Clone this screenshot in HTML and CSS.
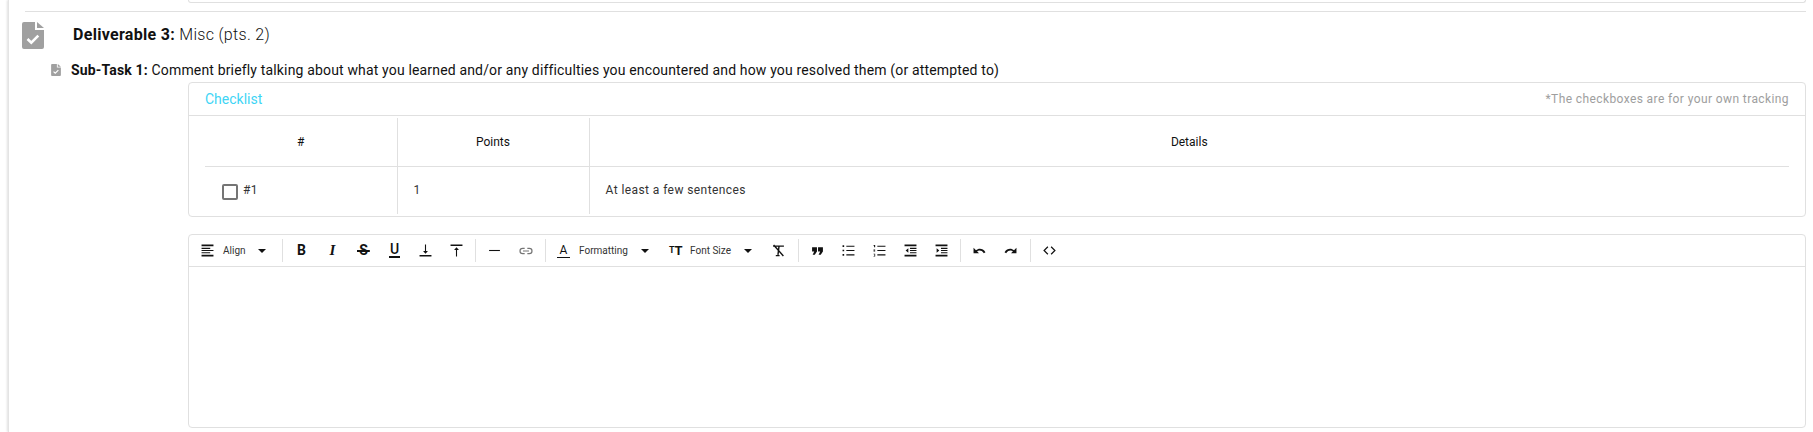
FILE: index.html
```html
<!DOCTYPE html>
<html lang="en">
<head>
  <meta charset="UTF-8">
  <title>Deliverable 3</title>
  <link rel="stylesheet" href="styles.css">
</head>
<body>
  <div class="page">
    <div class="prev-card"></div>
    <hr class="deliverable-rule">

    <div class="deliverable-header">
      <svg class="file-check" viewBox="0 0 22 27">
        <path d="M2 0H13V8H22V25a2 2 0 0 1-2 2H2a2 2 0 0 1-2-2V2a2 2 0 0 1 2-2z" fill="#a0a0a0"/>
        <path d="M15 0L22 6H15z" fill="#a0a0a0"/>
        <path d="M5.5 17l3.8 3.6 7-7" fill="none" stroke="#fff" stroke-width="2.6"/>
      </svg>
      <h2 class="deliverable-title"><b>Deliverable 3:</b> Misc (pts. 2)</h2>
    </div>

    <div class="subtask">
      <svg class="file-check-small" viewBox="0 0 22 27">
        <path d="M2 0H13V8H22V25a2 2 0 0 1-2 2H2a2 2 0 0 1-2-2V2a2 2 0 0 1 2-2z" fill="#a0a0a0"/>
        <path d="M15 0L22 6H15z" fill="#a0a0a0"/>
        <path d="M5.5 17l3.8 3.6 7-7" fill="none" stroke="#fff" stroke-width="2.6"/>
      </svg>
      <p><b>Sub-Task 1:</b> Comment briefly talking about what you learned and/or any difficulties you encountered and how you resolved them (or attempted to)</p>
    </div>

    <div class="card checklist">
      <div class="checklist-header">
        <span class="checklist-title">Checklist</span>
        <span class="checklist-note">*The checkboxes are for your own tracking</span>
      </div>
      <table class="checklist-table">
        <thead>
          <tr><th class="col-num">#</th><th class="col-points">Points</th><th>Details</th></tr>
        </thead>
        <tbody>
          <tr>
            <td><span class="check-cell"><span class="checkbox"></span>#1</span></td>
            <td>1</td>
            <td>At least a few sentences</td>
          </tr>
        </tbody>
      </table>
    </div>

    <div class="card editor">
      <div class="toolbar">
        <div class="tool-group">
          <button class="tool tool-select">
            <svg class="icon" viewBox="0 0 24 24"><path d="M1 1H23V4H1zM1 7H17V9H1zM1 11H23V13H1zM1 15H17V17H1zM1 20H23V23H1z"/></svg>
            <span class="tool-label tool-label-align">Align</span>
            <span class="caret"></span>
          </button>
        </div>
        <div class="tool-group tool-group-tight">
          <button class="tool"><span class="glyph glyph-bold">B</span></button>
          <button class="tool"><span class="glyph glyph-italic">I</span></button>
          <button class="tool"><span class="glyph glyph-strike">S</span></button>
          <button class="tool"><span class="glyph glyph-under">U</span></button>
          <button class="tool">
            <svg class="icon" viewBox="0 0 24 24"><path d="M11 1h2v12h3.500L12 18l-4.500-5H11zM1 20.500H23V23H1z"/></svg>
          </button>
          <button class="tool">
            <svg class="icon" viewBox="0 0 24 24"><path d="M11 23V11H7.500L12 6l4.500 5H13v12zM1 1H23V3.500H1z"/></svg>
          </button>
        </div>
        <div class="tool-group">
          <button class="tool">
            <svg class="icon" viewBox="0 0 24 24"><path d="M2 11H22V13H2z"/></svg>
          </button>
          <button class="tool">
            <svg class="icon icon-link" viewBox="0 0 24 24"><path d="M10 8H7a4 4 0 0 0 0 8h3M14 8h3a4 4 0 0 1 0 8h-3M7.500 12h9" fill="none" stroke="#757575" stroke-width="1.800"/></svg>
          </button>
        </div>
        <div class="tool-group">
          <button class="tool tool-select tool-format">
            <span class="glyph glyph-color">A</span>
            <span class="tool-label label-format">Formatting</span>
            <span class="caret caret-format"></span>
          </button>
          <button class="tool tool-select tool-size">
            <span class="size-glyph"><span>T</span><span>T</span></span>
            <span class="tool-label label-size">Font Size</span>
            <span class="caret caret-size"></span>
          </button>
          <button class="tool">
            <svg class="icon" viewBox="0 0 24 24"><path d="M2 4H22M13 4L11 20M7 21.500H14M3 2L21 22" fill="none" stroke="#111" stroke-width="2.600"/></svg>
          </button>
        </div>
        <div class="tool-group tool-group-tight">
          <button class="tool">
            <svg class="icon" viewBox="0 0 24 24"><path d="M2 6H11V14L7 20H3L6 14H2zM13 6H22V14L18 20H14L17 14H13z"/></svg>
          </button>
          <button class="tool">
            <svg class="icon" viewBox="0 0 24 24"><path d="M8 3H23V5H8zM8 11H23V13H8zM8 19H23V21H8zM1 2.500h3v3H1zM1 10.500h3v3H1zM1 18.500h3v3H1z"/></svg>
          </button>
          <button class="tool">
            <svg class="icon" viewBox="0 0 24 24"><path d="M8 3H23V5H8zM8 11H23V13H8zM8 19H23V21H8zM1 2h3v4H2V3H1zM1 10h3v2.500H2.500V13H4v1H1v-2.500h1.500V11H1zM1 18h3v5H1v-1h2v-1H2v-1h1v-1H1z"/></svg>
          </button>
          <button class="tool">
            <svg class="icon" viewBox="0 0 24 24"><path d="M1 1H23V4H1zM11 7H23V9H11zM11 11H23V13H11zM11 15H23V17H11zM1 20H23V23H1zM8 8V16L3 12z"/></svg>
          </button>
          <button class="tool">
            <svg class="icon" viewBox="0 0 24 24"><path d="M1 1H23V4H1zM11 7H23V9H11zM11 11H23V13H11zM11 15H23V17H11zM1 20H23V23H1zM3 8V16L8 12z"/></svg>
          </button>
        </div>
        <div class="tool-group">
          <button class="tool">
            <svg class="icon" viewBox="0 0 24 24"><path d="M1 7V17H11L7.500 13.500C10 11.500 16 10.500 20 17L23 15C18 7 10 7.500 5.500 11.500z"/></svg>
          </button>
          <button class="tool">
            <svg class="icon" viewBox="0 0 24 24"><path d="M23 7V17H13L16.500 13.500C14 11.500 8 10.500 4 17L1 15C6 7 14 7.500 18.500 11.500z"/></svg>
          </button>
        </div>
        <div class="tool-group tool-group-last">
          <button class="tool">
            <svg class="icon" viewBox="0 0 24 24"><path d="M9 5L2 12l7 7M15 5l7 7-7 7" fill="none" stroke="#111" stroke-width="2.200"/></svg>
          </button>
        </div>
      </div>
      <div class="editor-body"></div>
    </div>
  </div>
</body>
</html>
```

FILE: styles.css
```css
* {
  box-sizing: border-box;
}

html,
body {
  margin: 0;
  padding: 0;
  height: 432px;
  overflow: hidden;
  background-color: #fff;
}

body {
  font-family: Roboto, "Liberation Sans", sans-serif;
  color: #212121;
}

.page {
  margin-left: 8px;
  height: 432px;
  padding-right: 7px;
  border-left: 1px solid #e4e4e4;
  box-shadow: -1px 0 2px rgba(0, 0, 0, 0.12);
}

.prev-card {
  height: 3px;
  margin-left: 179px;
  border: 1px solid #e0e0e0;
  border-top: none;
  border-radius: 0 0 4px 4px;
}

.deliverable-rule {
  margin: 8px 0 0 16px;
  border: none;
  border-top: 1px solid #e0e0e0;
}

.deliverable-header {
  display: flex;
  align-items: flex-start;
  margin: 10px 0 0 13px;
}

.file-check {
  width: 22px;
  height: 27px;
  flex: none;
}

.deliverable-title {
  margin: 2px 0 0 29px;
  font-size: 16px;
  line-height: 22px;
  font-weight: 300;
  letter-spacing: 0.3px;
  color: #111;
}

.deliverable-title b {
  font-weight: 700;
}

.subtask {
  display: flex;
  align-items: center;
  height: 20px;
  margin: 11px 0 0 42px;
}

.file-check-small {
  width: 10px;
  height: 12px;
  flex: none;
}

.subtask p {
  margin: 0 0 0 10px;
  font-size: 14px;
  line-height: 20px;
  letter-spacing: 0.16px;
  color: #111;
}

.card {
  margin-left: 179px;
  border: 1px solid #e0e0e0;
  border-radius: 4px;
}

.checklist {
  height: 135px;
  margin-top: 2px;
}

.checklist-header {
  display: flex;
  justify-content: space-between;
  align-items: center;
  height: 33px;
  padding: 0 16px;
  border-bottom: 1px solid #e0e0e0;
}

.checklist-title {
  font-size: 14px;
  color: #3fd5f5;
}

.checklist-note {
  font-size: 12px;
  letter-spacing: 0.4px;
  color: #9e9e9e;
}

.checklist-table {
  width: calc(100% - 32px);
  margin: 2px 16px 0;
  border-collapse: collapse;
  table-layout: fixed;
  font-size: 12px;
  color: #333;
}

.col-num,
.col-points {
  width: 192px;
}

.checklist-table th {
  height: 48px;
  padding-top: 1px;
  font-weight: 400;
  color: #111;
  text-align: center;
  border-right: 1px solid #e0e0e0;
  border-bottom: 1px solid #e0e0e0;
}

.checklist-table td {
  height: 48px;
  padding: 0 16px;
  letter-spacing: 0.42px;
  border-right: 1px solid #e0e0e0;
}

.checklist-table th:last-child,
.checklist-table td:last-child {
  border-right: none;
}

.check-cell {
  display: flex;
  align-items: center;
  gap: 5px;
  margin-left: 1px;
}

.checkbox {
  width: 16px;
  height: 16px;
  margin-top: 3px;
  border: 2px solid #757575;
  border-radius: 2px;
}

.editor {
  height: 194px;
  margin-top: 17px;
}

.toolbar {
  display: flex;
  align-items: center;
  height: 32px;
  padding-left: 4px;
  border-bottom: 1px solid #e0e0e0;
}

.tool-group {
  display: flex;
  align-items: center;
  height: 23px;
  padding-right: 4px;
  margin-right: 3px;
  border-right: 1px solid #e0e0e0;
}

.tool-group-tight {
  padding-right: 3px;
}

.tool-group-last {
  border-right: none;
}

.tool {
  display: flex;
  align-items: center;
  justify-content: center;
  width: 31px;
  height: 23px;
  padding: 0;
  border: none;
  background: none;
  font-family: inherit;
  color: #111;
}

.tool-select {
  justify-content: flex-start;
  width: auto;
  padding: 0 12px 0 8px;
}

.tool-size {
  padding-right: 11px;
}

.icon {
  width: 13px;
  height: 13px;
  flex: none;
  fill: #111;
}

.icon-link {
  width: 16px;
  height: 16px;
}

.tool-label {
  margin-left: 9px;
  font-size: 10px;
  color: #333;
  white-space: nowrap;
}

.tool-label-align {
  width: 25px;
  text-align: left;
}

.label-format {
  width: 48px;
}

.label-size {
  width: 41px;
  margin-left: 8px;
}

.caret {
  width: 0;
  height: 0;
  margin-left: 10px;
  border-left: 4px solid transparent;
  border-right: 4px solid transparent;
  border-top: 4px solid #111;
}

.caret-format {
  margin-left: 14px;
}

.caret-size {
  margin-left: 13px;
}

.glyph {
  font-size: 14px;
  line-height: 15px;
  font-weight: 700;
}

.glyph-italic {
  font-family: "Liberation Serif", serif;
  font-size: 15px;
  font-style: italic;
}

.glyph-strike {
  padding: 0 2px;
  background: linear-gradient(#111, #111) center / 100% 2px no-repeat;
}

.glyph-under {
  padding: 0 1px;
  font-weight: 500;
  line-height: 13px;
  border-bottom: 2px solid #111;
}

.glyph-color {
  width: 13px;
  font-size: 12px;
  line-height: 13px;
  font-weight: 400;
  text-align: center;
  border-bottom: 1px solid #111;
}

.size-glyph {
  display: flex;
  align-items: flex-end;
  width: 13px;
  font-weight: 700;
  line-height: 13px;
  color: #111;
}

.size-glyph span:first-child {
  font-size: 9px;
}

.size-glyph span:last-child {
  font-size: 13px;
}

.editor-body {
  height: 160px;
}
```
